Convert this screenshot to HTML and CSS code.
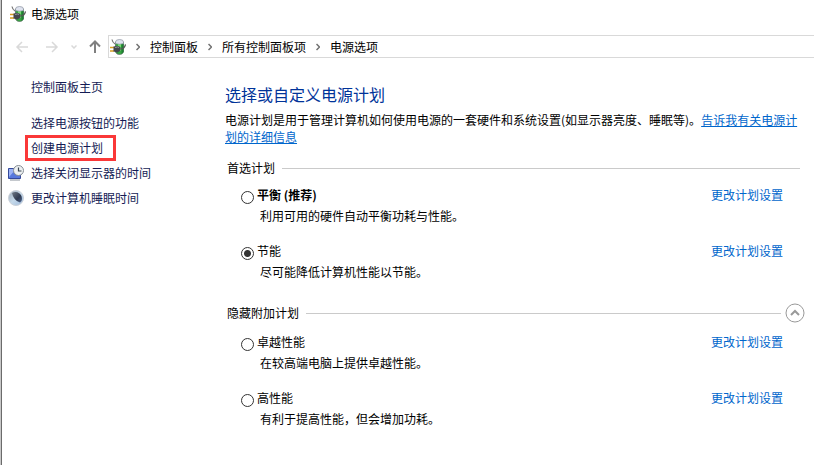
FILE: index.html
```html
<!DOCTYPE html>
<html lang="zh-CN">
<head>
    <meta charset="UTF-8">
    <meta name="viewport" content="width=device-width, initial-scale=1.0">
    <title>电源选项</title>
    <link rel="stylesheet" href="styles.css">
</head>
<body>

    <!-- Shared battery + plug icon -->
    <svg class="symbols" aria-hidden="true">
        <symbol id="power" viewBox="0 0 16 16">
            <path d="M2 .5q.5 3 3 4.500" fill="none" stroke="#777" stroke-width="1.200"/>
            <path d="M5.500 3v10q1 2.500 4 2.500t4-2.500V3z" fill="#35a83f" stroke="#587060" stroke-width=".8"/>
            <path d="M8 5h3v7H8z" fill="#79df72"/>
            <path d="M11.500 5h2v8l-2 2z" fill="#1f7f32"/>
            <path d="M5.500 3q0-2.500 4-2.500t4 2.500v1.500q-4 1.500-8 0z" fill="#dfe3ef" stroke="#8b929f" stroke-width=".7"/>
            <path d="M0 8.500h4M0 12h4" stroke="#d69d20" stroke-width="1.500"/>
            <path d="M3.500 7.500l4-.8 3 1.300v3.500l-3 2-4-1z" fill="#44474b"/>
            <path d="M5 8.500l2.500-.5 1.500.5" fill="none" stroke="#a5aaae" stroke-width=".8"/>
            <path d="M10.500 10q4 0 5-4.500" fill="none" stroke="#555" stroke-width="1.200"/>
        </symbol>
    </svg>

    <div class="window">
        <header>
            <div class="title-bar">
                <svg class="icon"><use href="#power"/></svg>
                <span>电源选项</span>
            </div>

            <div class="nav-bar">
                <div class="nav-buttons">
                    <button class="nav-button" aria-label="后退" disabled><svg width="14" height="12" viewBox="0 0 14 12"><path d="M13 6H2M7 1L2 6l5 5"/></svg></button>
                    <button class="nav-button" aria-label="前进" disabled><svg width="14" height="12" viewBox="0 0 14 12"><path d="M1 6h11M7 1l5 5-5 5"/></svg></button>
                    <button class="nav-button recent" aria-label="最近的位置" disabled><svg width="6" height="4" viewBox="0 0 6 4"><path d="M.5 .5L3 3 5.500 .5"/></svg></button>
                    <button class="nav-button up" aria-label="上移"><svg width="12" height="13" viewBox="0 0 12 13"><path d="M6 13V2M1 6.500L6 1.500l5 5"/></svg></button>
                </div>
                <nav class="address">
                    <svg class="icon"><use href="#power"/></svg>
                    <svg class="chevron" viewBox="0 0 4 8"><path d="M.5 1l3 3-3 3"/></svg>
                    <a href="#">控制面板</a>
                    <svg class="chevron" viewBox="0 0 4 8"><path d="M.5 1l3 3-3 3"/></svg>
                    <a href="#">所有控制面板项</a>
                    <svg class="chevron" viewBox="0 0 4 8"><path d="M.5 1l3 3-3 3"/></svg>
                    <a href="#">电源选项</a>
                </nav>
            </div>
        </header>

        <div class="content">
            <!-- Left tasks -->
            <aside class="sidebar">
                <a class="task home" href="#">控制面板主页</a>
                <a class="task" href="#">选择电源按钮的功能</a>
                <a class="task marked" href="#">创建电源计划</a>
                <a class="task with-icon" href="#">
                    <svg class="icon" viewBox="0 0 16 16">
                        <path d="M.5 3.500h12v10H.5z" fill="#5878dc" stroke="#35499b"/>
                        <path d="M1 4h7L1 12z" fill="#9bb2f5"/>
                        <path d="M2 15h10" stroke="#8a929b"/>
                        <circle cx="10.500" cy="5.500" r="5" fill="#edf0f1" stroke="#858d94"/>
                        <path d="M10.500 2.500v3.500h3" fill="none" stroke="#3a4652" stroke-width="1.200"/>
                    </svg>
                    选择关闭显示器的时间
                </a>
                <a class="task with-icon" href="#">
                    <svg class="icon" viewBox="0 0 16 16">
                        <defs>
                            <linearGradient id="moon" x1="0" y1="0" x2="1" y2="1">
                                <stop offset="0" stop-color="#9ba7b3"/>
                                <stop offset=".5" stop-color="#c5d9ea"/>
                                <stop offset="1" stop-color="#9db9dc"/>
                            </linearGradient>
                            <linearGradient id="night" x1="0" y1="0" x2="1" y2="1">
                                <stop offset="0" stop-color="#6d7682"/>
                                <stop offset=".6" stop-color="#2f3a50"/>
                                <stop offset="1" stop-color="#50678f"/>
                            </linearGradient>
                        </defs>
                        <circle cx="8" cy="8" r="7.500" fill="url(#moon)" stroke="#ccd2da"/>
                        <path d="M4 3q4-2 7.500.5T13.500 11l-1.500 1.500Q5.500 10.500 4 3z" fill="url(#night)"/>
                    </svg>
                    更改计算机睡眠时间
                </a>
            </aside>

            <!-- Power plans -->
            <main>
                <h1>选择或自定义电源计划</h1>
                <p class="intro">电源计划是用于管理计算机如何使用电源的一套硬件和系统设置(如显示器亮度、睡眠等)。<a href="#">告诉我有关电源计划的详细信息</a></p>

                <section>
                    <div class="section-head">
                        <h2>首选计划</h2>
                        <span class="rule"></span>
                    </div>
                    <div class="plan">
                        <input type="radio" name="plan" id="balanced">
                        <label class="recommended" for="balanced">平衡 (推荐)</label>
                        <a href="#">更改计划设置</a>
                        <p>利用可用的硬件自动平衡功耗与性能。</p>
                    </div>
                    <div class="plan">
                        <input type="radio" name="plan" id="saver" checked>
                        <label for="saver">节能</label>
                        <a href="#">更改计划设置</a>
                        <p>尽可能降低计算机性能以节能。</p>
                    </div>
                </section>

                <section>
                    <div class="section-head more">
                        <h2>隐藏附加计划</h2>
                        <span class="rule"></span>
                        <button class="collapse" aria-label="隐藏附加计划">
                            <svg width="20" height="20" viewBox="0 0 20 20"><circle cx="10" cy="10" r="9"/><path class="arrow" d="M6 12l4-4 4 4"/></svg>
                        </button>
                    </div>
                    <div class="plan">
                        <input type="radio" name="plan" id="ultimate">
                        <label for="ultimate">卓越性能</label>
                        <a href="#">更改计划设置</a>
                        <p>在较高端电脑上提供卓越性能。</p>
                    </div>
                    <div class="plan">
                        <input type="radio" name="plan" id="high">
                        <label for="high">高性能</label>
                        <a href="#">更改计划设置</a>
                        <p>有利于提高性能，但会增加功耗。</p>
                    </div>
                </section>
            </main>
        </div>
    </div>

</body>
</html>
```
FILE: styles.css
```css
* {
    box-sizing: border-box;
}

body {
    margin: 0;
    font-family: "Noto Sans CJK SC", sans-serif;
    font-size: 12px;
    line-height: 20px;
    color: #000;
    background-color: #c8c8c8;
}

h1, h2, p {
    margin: 0;
    font-weight: normal;
}

a {
    color: #0066cc;
    text-decoration: none;
}

button {
    padding: 0;
    border: 0;
    background: none;
}

svg {
    display: block;
    flex: none;
}

.symbols {
    position: absolute;
    width: 0;
    height: 0;
}

.icon {
    width: 16px;
    height: 16px;
}

.window {
    min-height: 100vh;
    margin-left: 1px;
    border-left: 1px solid #6b6b6b;
    background-color: #fff;
}

/* Title and address bar */
.title-bar {
    display: flex;
    align-items: center;
    gap: 5px;
    height: 28px;
    padding-left: 8px;
}

.nav-bar {
    display: flex;
    align-items: center;
    padding-top: 7px;
}

.nav-buttons {
    display: flex;
    align-items: center;
    width: 106px;
    padding-left: 13px;
    gap: 16px;
}

.nav-button {
    fill: none;
    stroke: #d9d9d9;
    stroke-width: 1.5;
}

.nav-button.recent {
    margin-left: -4px;
}

.nav-button.up {
    margin-left: -4px;
    stroke: #808080;
    stroke-width: 2;
}

.address {
    display: flex;
    flex: 1;
    align-items: center;
    gap: 10px;
    height: 23px;
    padding-left: 1px;
    border: 1px solid #d9d9d9;
    border-right: 0;
}

.address a {
    color: #000;
}

.chevron {
    width: 4px;
    height: 8px;
    fill: none;
    stroke: #707070;
    stroke-width: 1.5;
}

/* Layout */
.content {
    display: flex;
}

.sidebar {
    display: flex;
    flex-direction: column;
    align-items: flex-start;
    width: 223px;
    padding: 16px 0 0 6px;
}

.task {
    display: flex;
    align-items: center;
    height: 25px;
    margin-left: 23px;
    color: #151c55;
}

.home {
    margin-bottom: 11px;
}

.with-icon {
    gap: 7px;
    margin-left: 0;
}

.marked {
    height: 26px;
    margin: 0 0 -1px 17px;
    padding: 0 10px 0 3px;
    border: 3px solid #fa3838;
}

main {
    flex: 1;
    padding: 24px 14px 20px 0;
}

h1 {
    font-size: 16px;
    line-height: 24px;
    color: #003399;
}

.intro {
    margin-top: 5px;
    line-height: 17px;
}

.intro a {
    text-decoration: underline;
}

/* Section headings */
.section-head {
    display: flex;
    align-items: center;
    gap: 7px;
    margin: 13px 0 7px;
    padding-left: 2px;
}

.section-head.more {
    margin: 21px -5px 9px 0;
}

h2 {
    font-size: 12px;
}

.rule {
    flex: 1;
    height: 1px;
    background-color: #cacaca;
}

.collapse {
    margin-left: -3px;
    fill: none;
    stroke: #999;
}

.collapse .arrow {
    stroke-width: 2;
}

/* Plans */
.plan {
    display: grid;
    grid-template-columns: 13px 1fr auto;
    column-gap: 3px;
    row-gap: 1px;
    padding: 0 17px 0 16px;
}

.plan + .plan {
    margin-top: 15px;
}

.plan p {
    grid-column: 2 / -1;
    padding-left: 3px;
}

.plan input {
    appearance: none;
    align-self: end;
    width: 13px;
    height: 13px;
    margin: 0 0 1px;
    border: 1px solid #333;
    border-radius: 50%;
    background-color: #fff;
}

.plan input:checked {
    background-image: radial-gradient(circle, #333 3px, transparent 4px);
}

.plan label {
    justify-self: start;
}

.recommended {
    font-weight: bold;
}
```
